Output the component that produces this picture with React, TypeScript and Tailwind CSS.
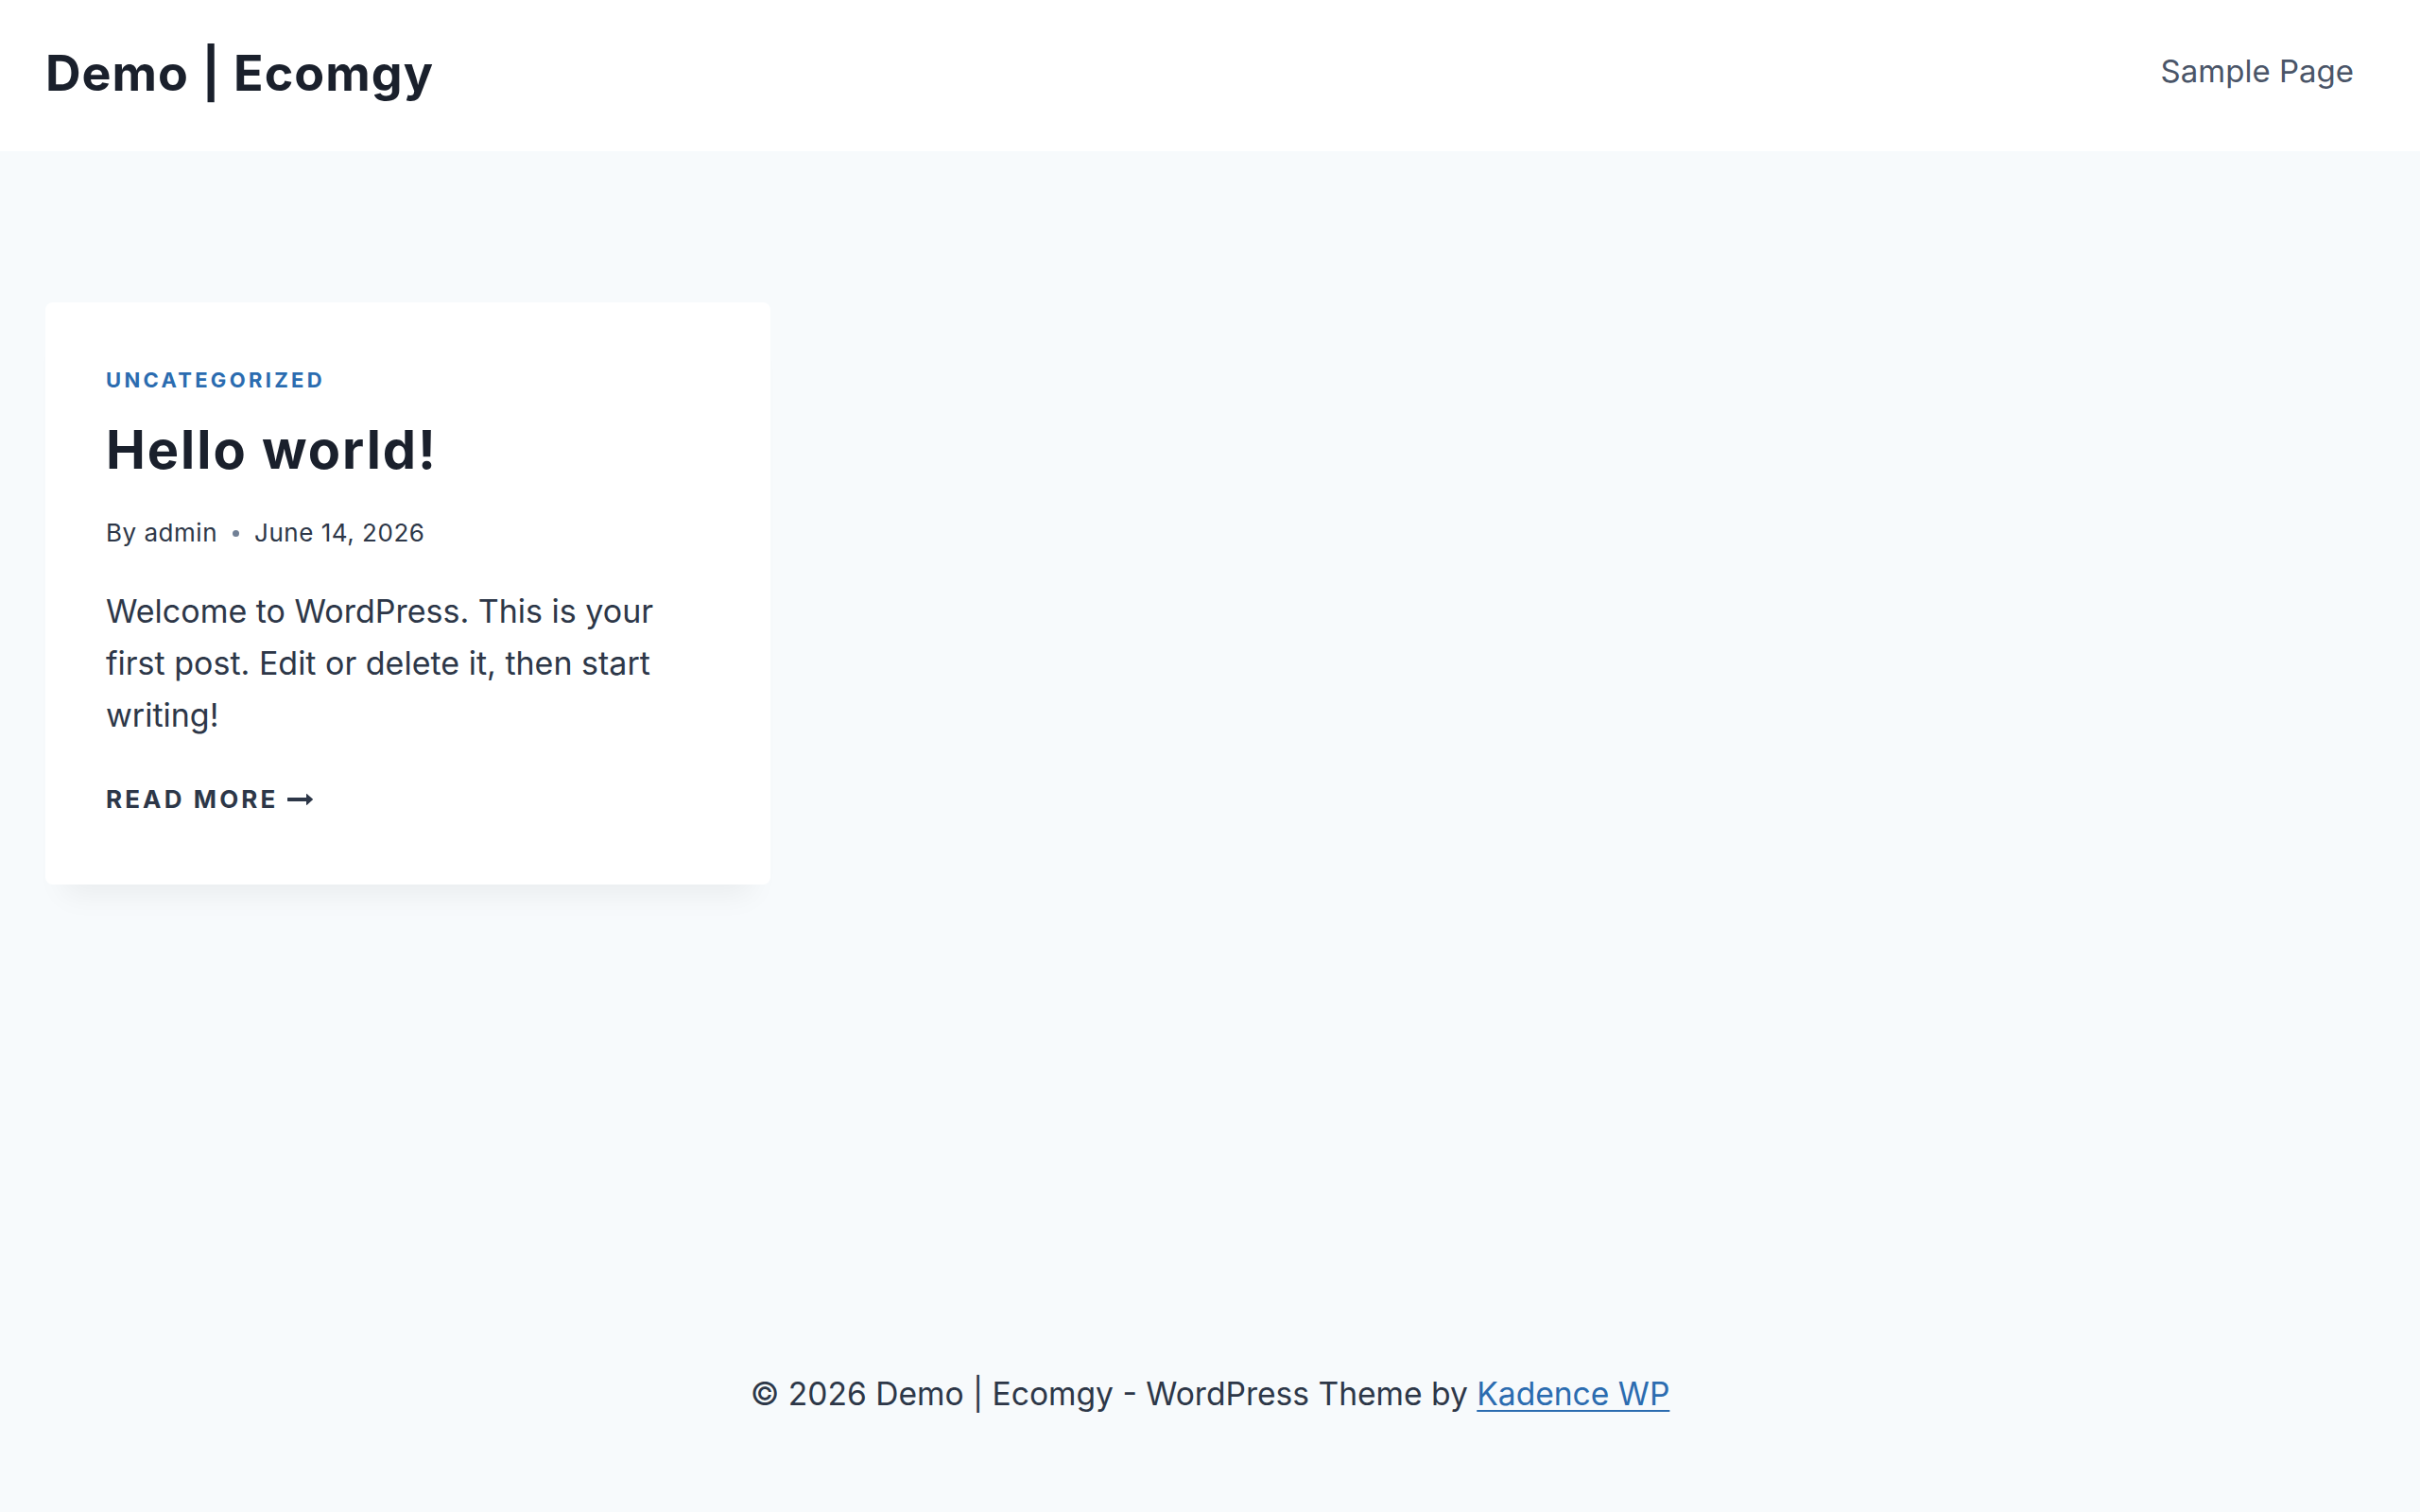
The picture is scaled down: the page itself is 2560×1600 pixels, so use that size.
import React from "react";

const font = { fontFamily: "Inter, 'Noto Sans', 'Liberation Sans', sans-serif" };

function LongArrowRight() {
  return (
    <svg viewBox="0 0 27 28" className="w-[27px] h-[28px]" fill="currentColor" aria-hidden="true">
      <path d="M27 13.953c0 0.141-0.063 0.281-0.156 0.375l-6 5.531c-0.156 0.141-0.359 0.172-0.547 0.094-0.172-0.078-0.297-0.25-0.297-0.453v-3.5h-19.5c-0.281 0-0.5-0.219-0.5-0.5v-3c0-0.281 0.219-0.5 0.5-0.5h19.5v-3.5c0-0.203 0.109-0.375 0.297-0.453s0.391-0.047 0.547 0.078l6 5.469c0.094 0.094 0.156 0.219 0.156 0.359v0z" />
    </svg>
  );
}

function PostCard() {
  return (
    <article className="w-[767px] bg-white rounded-lg px-[64px] pt-[64px] pb-[70px] shadow-[0_30px_30px_-20px_rgba(0,0,0,0.06)]">
      <div className="text-[22px] leading-[36px] font-bold uppercase tracking-[0.15em] text-[#2b6cb0]">
        <a href="#">Uncategorized</a>
      </div>
      <h2 className="mt-[20px] text-[56px] leading-[72px] font-bold tracking-[0.035em] text-[#1a202c]">
        <a href="#">Hello world!</a>
      </h2>
      <div className="mt-[32px] flex items-center text-[26px] leading-[40px] tracking-[0.02em] text-[#2d3748]">
        <span>By admin</span>
        <span className="mx-[16px] w-[7px] h-[7px] rounded-full bg-[#718096]" />
        <span>June 14, 2026</span>
      </div>
      <p className="mt-[35px] text-[34px] leading-[55px] text-[#2d3748]">
        Welcome to WordPress. This is your first post. Edit or delete it, then start writing!
      </p>
      <div className="mt-[42px] flex items-center text-[26px] leading-[40px] font-bold uppercase tracking-[0.12em] text-[#2d3748]">
        <a href="#">Read More</a>
        <span className="ml-[10px] flex items-center">
          <LongArrowRight />
        </span>
      </div>
    </article>
  );
}

export default function App() {
  return (
    <div className="min-h-screen flex flex-col bg-[#f7fafc]" style={font}>
      <header className="bg-white h-[160px] px-[48px] flex items-start justify-between">
        <div className="mt-[46px] text-[52px] leading-[64px] font-bold tracking-[0.02em] text-[#1a202c]">Demo | Ecomgy</div>
        <nav className="mt-[55px] pr-[22px] text-[33px] leading-[40px] text-[#4a5568]">
          <a href="#">Sample Page</a>
        </nav>
      </header>
      <main className="flex-1 px-[48px] pt-[160px]">
        <PostCard />
      </main>
      <footer className="pb-[101px] text-center text-[33.6px] leading-[48px] text-[#2d3748]">
        © 2026 Demo | Ecomgy - WordPress Theme by{" "}
        <a href="#" className="text-[#2b6cb0] underline decoration-2 underline-offset-[5px]">
          Kadence WP
        </a>
      </footer>
    </div>
  );
}
